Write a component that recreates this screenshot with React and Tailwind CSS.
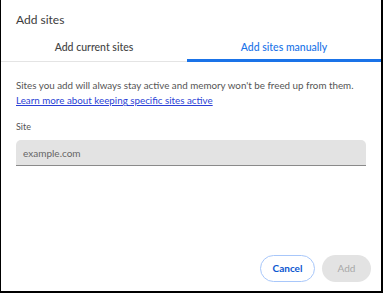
import React, { useState } from 'react';

const tabs = ['Add current sites', 'Add sites manually'];

const App = () => {
  const [activeTab, setActiveTab] = useState(1);
  const [site, setSite] = useState('');

  return (
    <div className="w-[383px] h-[293px] bg-white border-l border-r-2 border-b-2 border-black flex flex-col font-['Lato',sans-serif]">
      <div className="h-[34px] px-[15px] pt-[12px] text-[12px] leading-[16px] text-[#3c3c3c]">Add sites</div>

      <div className="flex h-[28px] border-b border-[#e4e4e4]">
        {tabs.map((label, i) => (
          <button
            key={label}
            onClick={() => setActiveTab(i)}
            className={`${i === 0 ? 'w-[186px]' : 'flex-1'} -mb-px flex items-center justify-center text-[10.5px] font-medium ${
              activeTab === i ? 'text-[#1a73e8] border-b-[3px] border-[#1a73e8] pt-[3px]' : 'text-[#444]'
            }`}
          >
            {label}
          </button>
        ))}
      </div>

      <div className="px-[15px] pt-[16px]">
        <p className="text-[9.8px] leading-[15px] text-[#555]">
          Sites you add will always stay active and memory won't be freed up from them.
          <br />
          <a href="#" className="text-[#2b3fd6] underline">Learn more about keeping specific sites active</a>
        </p>

        <div className="mt-[13px] text-[9px] leading-[12px] text-[#555]">Site</div>
        <input
          value={site}
          onChange={e => setSite(e.target.value)}
          placeholder="example.com"
          className="mt-[7px] w-full h-[26px] rounded-t-[5px] bg-[#e3e3e3] border-b border-[#8a8a8a] px-[7px] text-[10px] text-[#333] placeholder:text-[#666] outline-none"
        />
      </div>

      <div className="mt-auto flex justify-end gap-[7px] pr-[10px] pb-[9px]">
        <button className="w-[55px] h-[27px] rounded-full border border-[#a8c7fa] text-[10px] font-bold text-[#0b57d0]">Cancel</button>
        <button disabled className="w-[49px] h-[27px] rounded-full bg-[#e3e3e3] text-[10px] text-[#a8a8a8]">Add</button>
      </div>
    </div>
  );
};

export default App;
